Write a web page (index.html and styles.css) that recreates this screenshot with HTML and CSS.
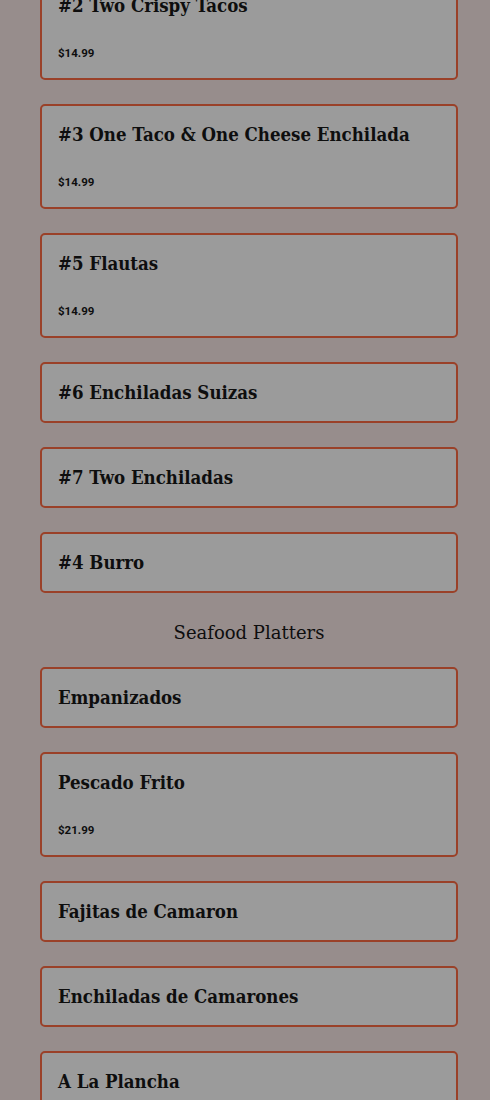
FILE: index.html
```html
<!DOCTYPE html>
<html lang="en">
<head>
    <meta charset="UTF-8">
    <meta name="viewport" content="width=device-width, initial-scale=1.0">
    <title>Menu</title>
    <link rel="stylesheet" href="styles.css">
</head>
<body>
    <div class="menu">
        <div class="item">
            <h3 class="item-name">#2 Two Crispy Tacos</h3>
            <p class="item-price">$14.99</p>
        </div>
        <div class="item">
            <h3 class="item-name">#3 One Taco &amp; One Cheese Enchilada</h3>
            <p class="item-price">$14.99</p>
        </div>
        <div class="item">
            <h3 class="item-name">#5 Flautas</h3>
            <p class="item-price">$14.99</p>
        </div>
        <div class="item">
            <h3 class="item-name">#6 Enchiladas Suizas</h3>
        </div>
        <div class="item">
            <h3 class="item-name">#7 Two Enchiladas</h3>
        </div>
        <div class="item">
            <h3 class="item-name">#4 Burro</h3>
        </div>

        <h2 class="category">Seafood Platters</h2>

        <div class="item">
            <h3 class="item-name">Empanizados</h3>
        </div>
        <div class="item">
            <h3 class="item-name">Pescado Frito</h3>
            <p class="item-price">$21.99</p>
        </div>
        <div class="item">
            <h3 class="item-name">Fajitas de Camaron</h3>
        </div>
        <div class="item">
            <h3 class="item-name">Enchiladas de Camarones</h3>
        </div>
        <div class="item">
            <h3 class="item-name">A La Plancha</h3>
        </div>
    </div>
</body>
</html>
```

FILE: styles.css
```css
body {
    margin: 0;
    background-color: #978d8c;
    font-family: "DejaVu Serif", "Liberation Serif", serif;
    color: #0e0e0e;
}
.menu {
    display: flex;
    flex-direction: column;
    gap: 24px;
    padding: 0 32px 40px 40px;
    margin-top: -25px;
}
.item {
    background-color: #9b9b9b;
    border: 2px solid #9a4129;
    border-radius: 5px;
    padding: 16px;
}
.item-name {
    margin: 0;
    font-size: 18.5px;
    font-stretch: condensed;
    line-height: 25px;
    font-weight: bold;
}
.item-price {
    margin: 26px 0 0;
    font-family: Roboto, "Liberation Sans", sans-serif;
    font-size: 11.5px;
    line-height: 18px;
    font-weight: bold;
}
.category {
    margin: 3px 0 -3px;
    text-align: center;
    font-size: 18px;
    line-height: 26px;
    font-weight: normal;
}
```
